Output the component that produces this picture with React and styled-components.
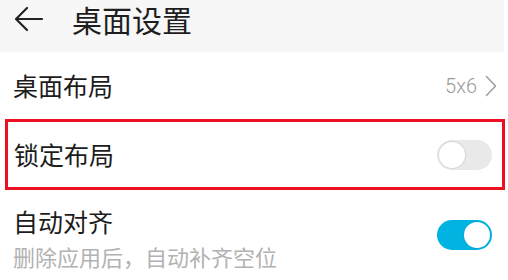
import React, { useState } from 'react';
import styled, { createGlobalStyle } from 'styled-components';

const GlobalStyle = createGlobalStyle`
  html, body {
    margin: 0;
    padding: 0;
    background: #ffffff;
    font-family: "Noto Sans CJK SC", "Noto Sans", sans-serif;
  }
`;

const Page = styled.div`
  width: 508px;
  height: 280px;
  overflow: hidden;
  background: #ffffff;
`;

const Header = styled.div`
  width: 504px;
  height: 52px;
  box-sizing: border-box;
  background: #f7f7f7;
  display: flex;
  align-items: flex-start;
  padding: 0 0 0 14px;
`;

const BackButton = styled.button`
  border: none;
  background: none;
  padding: 0;
  width: 30px;
  height: 38px;
  display: flex;
  align-items: center;
  color: #222;
`;

const Title = styled.h1`
  margin: 0 0 0 28px;
  font-size: 30px;
  font-weight: 400;
  color: #1e1e1e;
  line-height: 38px;
`;

const List = styled.div`
  padding: 0 16px 0 13px;
`;

const Row = styled.div`
  display: flex;
  align-items: center;
  justify-content: space-between;
  height: ${({ $height }) => $height}px;
  box-sizing: border-box;
  ${({ $highlight }) =>
    $highlight &&
    `
    border: 3px solid #ec1020;
    margin: 0 -13px 0 -8px;
    padding: 0 10px 0 6px;
  `}
`;

const Texts = styled.div`
  display: flex;
  flex-direction: column;
  gap: 8px;
  margin-top: 6px;
`;

const Label = styled.div`
  font-size: 25px;
  color: #1c1c1c;
  line-height: 1.1;
`;

const Sub = styled.div`
  font-size: 22px;
  color: #b2b2b2;
  line-height: 1.1;
`;

const Value = styled.div`
  display: flex;
  align-items: center;
  gap: 8px;
  margin-right: -5px;
  font-family: Roboto, "Noto Sans", sans-serif;
  font-size: 20px;
  font-weight: 300;
  color: #9a9a9a;
`;

const Track = styled.button`
  position: relative;
  width: 55px;
  height: 30px;
  padding: 0;
  border: none;
  border-radius: 15px;
  background: ${({ $on }) => ($on ? '#00b3e0' : '#e9e9e9')};
  cursor: pointer;
`;

const Knob = styled.span`
  position: absolute;
  top: 2px;
  left: ${({ $on }) => ($on ? '27px' : '2px')};
  width: 26px;
  height: 26px;
  border-radius: 50%;
  background: #ffffff;
  box-shadow: 0 0 1px 1px ${({ $on }) => ($on ? 'rgba(0,150,200,0.3)' : 'rgba(0,0,0,0.08)')};
`;

function Toggle({ on, onChange }) {
  return (
    <Track $on={on} onClick={() => onChange(!on)}>
      <Knob $on={on} />
    </Track>
  );
}

export default function App() {
  const [locked, setLocked] = useState(false);
  const [align, setAlign] = useState(true);

  return (
    <Page>
      <GlobalStyle />
      <Header>
        <BackButton>
          <svg width="30" height="26" viewBox="0 0 30 26" fill="none" stroke="#222" strokeWidth="2.2" strokeLinecap="round" strokeLinejoin="round">
            <path d="M28 13H3" />
            <path d="M13 2L2 13l11 11" />
          </svg>
        </BackButton>
        <Title>桌面设置</Title>
      </Header>
      <List>
        <Row $height={67}>
          <Label>桌面布局</Label>
          <Value>
            5x6
            <svg width="12" height="22" viewBox="0 0 12 22" fill="none" stroke="#a0a0a0" strokeWidth="1.6" strokeLinecap="round" strokeLinejoin="round">
              <path d="M1.5 1.5L10.5 11L1.5 20.5" />
            </svg>
          </Value>
        </Row>
        <Row $height={71} $highlight>
          <Label>锁定布局</Label>
          <Toggle on={locked} onChange={setLocked} />
        </Row>
        <Row $height={90}>
          <Texts>
            <Label>自动对齐</Label>
            <Sub>删除应用后，自动补齐空位</Sub>
          </Texts>
          <Toggle on={align} onChange={setAlign} />
        </Row>
      </List>
    </Page>
  );
}
